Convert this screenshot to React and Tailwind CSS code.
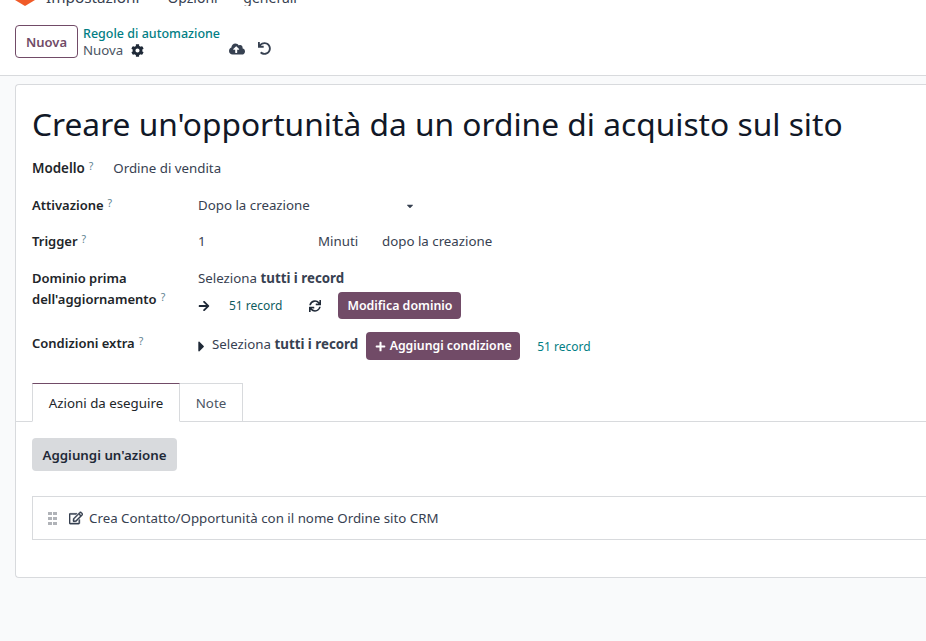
import { FaCog, FaCloudUploadAlt, FaUndo, FaArrowRight, FaSync, FaCaretRight, FaCaretDown, FaPlus, FaRegEdit } from 'react-icons/fa'

function Help() {
  return <sup className="text-[10.5px] font-normal text-[#5f8291] ml-1 relative -top-[3px]">?</sup>
}

function Label({ children }) {
  return <div className="w-[166px] shrink-0 text-[13px] font-semibold text-[#212529] leading-[21px]">{children}<Help /></div>
}

export default function App() {
  return (
    <div className="h-[641px] overflow-hidden bg-[#f9fafb] text-[13.3px] text-[#374151] font-['Noto_Sans',sans-serif]">
      <div className="bg-white h-[76px] border-b border-[#d8dadd]">
        {/* navbar, scrolled almost out of the window */}
        <div className="h-[6px] overflow-hidden flex items-end pl-[15px] text-[15.3px] leading-[17px] whitespace-nowrap">
          <svg width="20" height="6" viewBox="0 0 20 6" className="self-start shrink-0">
            <polygon points="0,0 20,0 10,6" fill="#f05a28" />
          </svg>
          <span className="ml-[11px]">Impostazioni</span>
          <span className="ml-[28px] text-[14px] [word-spacing:22px]">Opzioni generali</span>
        </div>
        <div className="flex items-center px-[15px] pt-[19px]">
          <button className="h-[33px] w-[63px] pt-[2px] border border-[#714b67] rounded text-[#714b67] bg-white text-[13px] font-semibold">Nuova</button>
          <div className="ml-[5px] w-[146px] leading-[16px] mt-[1px]">
            <div className="text-[#017e84] text-[12.5px] font-medium">Regole di automazione</div>
            <div className="flex items-center gap-2 text-[#4b5563]">Nuova <FaCog className="text-[#1f2937] text-[13px]" /></div>
          </div>
          <div className="flex items-center gap-[13px] mt-[14px]">
            <FaCloudUploadAlt className="text-[#374151] text-[16px]" />
            <FaUndo className="text-[#374151] text-[13px]" />
          </div>
        </div>
      </div>

      <div className="ml-[15px] mt-[8px] bg-white border border-[#d8dadd] border-r-0 rounded-l h-[494px] pl-[16px] pt-[15px]">
        <h1 className="text-[31.7px] leading-[48px] text-[#111827] whitespace-nowrap">Creare un'opportunità da un ordine di acquisto sul sito</h1>

        <div className="flex mt-[10px] leading-[21px]">
          <div className="font-semibold text-[#212529] text-[13.4px]">Modello<Help /></div>
          <div className="ml-[20px]">Ordine di vendita</div>
        </div>

        <div className="flex mt-[16px]">
          <Label>Attivazione</Label>
          <div className="w-[217px] flex items-center justify-between leading-[21px]">
            <span>Dopo la creazione</span>
            <FaCaretDown className="text-[10px] text-[#374151]" />
          </div>
        </div>

        <div className="flex mt-[15px] leading-[21px]">
          <Label>Trigger</Label>
          <div className="w-[120px]">1</div>
          <div className="w-[64px]">Minuti</div>
          <div>dopo la creazione</div>
        </div>

        <div className="flex mt-[16px]">
          <Label>Dominio prima dell'aggiornamento</Label>
          <div>
            <div className="leading-[21px]">Seleziona <b className="font-bold">tutti i record</b></div>
            <div className="flex items-center h-[27px] mt-[3px]">
              <FaArrowRight className="text-[#1f2937] text-[12px]" />
              <span className="ml-[19px] pt-px text-[12px] text-[#0f5c60]">51 record</span>
              <FaSync className="ml-[27px] text-[#1f2937] text-[12px]" />
              <button className="ml-[17px] h-[27px] w-[123px] pt-px rounded bg-[#714b67] text-white text-[12.4px] font-semibold">Modifica dominio</button>
            </div>
          </div>
        </div>

        <div className="flex mt-[13px] items-start">
          <div className="pt-px"><Label>Condizioni extra</Label></div>
          <div className="flex items-center h-[28px]">
            <FaCaretRight className="text-[#1f2937] text-[17px] shrink-0 -ml-[5px]" />
            <span className="ml-[2px] -mt-[2px]">Seleziona <b className="font-bold">tutti i record</b></span>
            <button className="ml-[8px] h-[28px] w-[154px] pt-px justify-center rounded bg-[#714b67] text-white text-[12.3px] font-semibold flex items-center gap-1"><FaPlus className="text-[11px]" />Aggiungi condizione</button>
            <span className="ml-[17px] mt-[2px] text-[12px] text-[#017e84]">51 record</span>
          </div>
        </div>

        <div className="flex mt-[23px] -ml-[16px] pl-[16px] border-b border-[#d8dadd] h-[39px]">
          <div className="w-[148px] h-[39px] pt-[2px] border border-[#d8dadd] border-b-white border-t-[#714b67] flex items-center justify-center text-[#212529]">Azioni da eseguire</div>
          <div className="w-[63px] h-[39px] pt-[2px] border border-l-0 border-[#d8dadd] flex items-center justify-center text-[#4b5563]">Note</div>
        </div>

        <button className="mt-[16px] h-[33px] w-[145px] pt-[2px] rounded bg-[#d8dadd] text-[#1f2937] font-semibold block">Aggiungi un'azione</button>

        <div className="mt-[25px] h-[44px] border border-[#d8dadd] border-r-0 flex items-center pl-[15px]">
          <div className="grid grid-cols-2 gap-x-px gap-y-[2px]">
            <i className="w-[4px] h-[3px] bg-[#b0b3b8]" /><i className="w-[4px] h-[3px] bg-[#b0b3b8]" />
            <i className="w-[4px] h-[3px] bg-[#b0b3b8]" /><i className="w-[4px] h-[3px] bg-[#b0b3b8]" />
            <i className="w-[4px] h-[3px] bg-[#b0b3b8]" /><i className="w-[4px] h-[3px] bg-[#b0b3b8]" />
          </div>
          <FaRegEdit className="ml-[12px] text-[#374151] text-[14px] stroke-[16]" />
          <span className="ml-[6px] pt-[2px]">Crea Contatto/Opportunità con il nome Ordine sito CRM</span>
        </div>
      </div>
    </div>
  )
}
